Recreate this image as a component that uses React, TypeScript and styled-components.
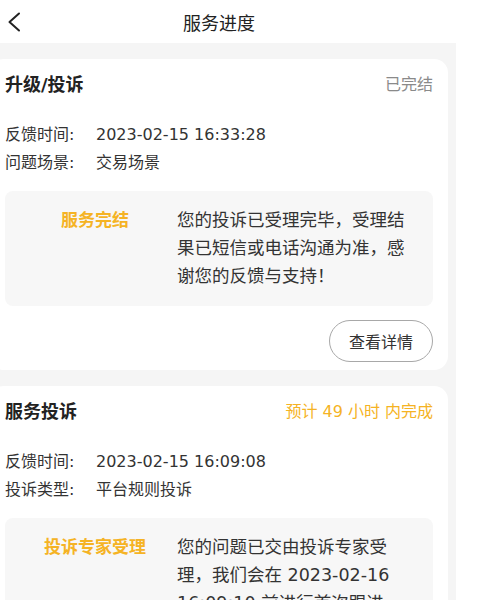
import React from 'react';
import styled, { createGlobalStyle } from 'styled-components';

const GlobalStyle = createGlobalStyle`
  html, body {
    margin: 0;
    padding: 0;
    background: #ffffff;
    overflow: hidden;
  }
  body {
    font-family: "DejaVu Sans", "Noto Sans CJK SC", sans-serif;
    color: #333333;
  }
`;

const Screen = styled.div`
  width: 474px;
  margin-left: -18px;
  display: flex;
  flex-direction: column;
`;

const NavBar = styled.header`
  height: 43px;
  background: #ffffff;
  display: grid;
  grid-template-columns: 60px 1fr 60px;
  align-items: center;
  padding-left: 20px;
  box-sizing: border-box;
`;

const BackButton = styled.button`
  border: none;
  background: none;
  padding: 0;
  width: 24px;
  height: 24px;
  display: flex;
  align-items: center;
  justify-content: center;
  cursor: pointer;
`;

const NavTitle = styled.h1`
  margin: 0 0 0 -20px;
  font-size: 18px;
  font-weight: 400;
  color: #222222;
  text-align: center;
`;

const Content = styled.main`
  background: #f5f5f5;
  padding: 16px 8px 0;
  display: flex;
  flex-direction: column;
  gap: 16px;
  min-height: 600px;
`;

const Card = styled.section`
  background: #ffffff;
  border-radius: 14px;
  padding: 4px 15px 8px;
  display: flex;
  flex-direction: column;
`;

const CardHead = styled.div`
  height: 40px;
  display: flex;
  align-items: center;
  justify-content: space-between;
`;

const CardTitle = styled.h2`
  margin: 0;
  font-size: 18px;
  font-weight: 700;
  color: #222222;
`;

const Status = styled.span<{ $accent?: boolean }>`
  font-size: 16px;
  color: ${p => (p.$accent ? '#f5b324' : '#8a8a8a')};
`;

const InfoList = styled.dl`
  margin: 18px 0 0;
  display: flex;
  flex-direction: column;
`;

const InfoRow = styled.div`
  display: flex;
  font-size: 16px;
  line-height: 28px;
  color: #333333;
`;

const InfoLabel = styled.dt`
  width: 91px;
  flex-shrink: 0;
`;

const InfoValue = styled.dd`
  margin: 0;
`;

const ProgressBox = styled.div`
  margin-top: 14px;
  background: #f7f7f7;
  border-radius: 8px;
  padding: 15px 0 16px 8px;
  display: flex;
  align-items: flex-start;
`;

const StepName = styled.div`
  width: 164px;
  flex-shrink: 0;
  text-align: center;
  font-size: 17px;
  line-height: 28px;
  font-weight: 700;
  color: #f5b324;
`;

const StepText = styled.p`
  margin: 0;
  width: 235px;
  font-size: 17.5px;
  line-height: 28px;
  color: #333333;
`;

const Actions = styled.div`
  margin-top: 14px;
  display: flex;
  justify-content: flex-end;
`;

const DetailButton = styled.button`
  height: 42px;
  width: 104px;
  border: 1px solid #a8a8a8;
  border-radius: 21px;
  background: #ffffff;
  font-family: inherit;
  font-size: 16px;
  color: #333333;
  padding: 0;
  cursor: pointer;
`;

type Item = {
  title: string;
  status: string;
  accent?: boolean;
  info: [string, string][];
  step: string;
  text: string;
};

const items: Item[] = [
  {
    title: '升级/投诉',
    status: '已完结',
    info: [
      ['反馈时间:', '2023-02-15 16:33:28'],
      ['问题场景:', '交易场景'],
    ],
    step: '服务完结',
    text: '您的投诉已受理完毕，受理结果已短信或电话沟通为准，感谢您的反馈与支持！',
  },
  {
    title: '服务投诉',
    status: '预计 49 小时 内完成',
    accent: true,
    info: [
      ['反馈时间:', '2023-02-15 16:09:08'],
      ['投诉类型:', '平台规则投诉'],
    ],
    step: '投诉专家受理',
    text: '您的问题已交由投诉专家受理，我们会在 2023-02-16 16:09:10 前进行首次跟进，请您耐心等待。',
  },
];

export default function App() {
  return (
    <>
      <GlobalStyle />
      <Screen>
        <NavBar>
          <BackButton aria-label="返回">
            <svg width="14" height="20" viewBox="0 0 14 20" fill="none">
              <polyline points="12,1.5 2.5,10 12,18.5" stroke="#222" strokeWidth="2" strokeLinecap="round" strokeLinejoin="round" />
            </svg>
          </BackButton>
          <NavTitle>服务进度</NavTitle>
          <span />
        </NavBar>
        <Content>
          {items.map(item => (
            <Card key={item.title}>
              <CardHead>
                <CardTitle>{item.title}</CardTitle>
                <Status $accent={item.accent}>{item.status}</Status>
              </CardHead>
              <InfoList>
                {item.info.map(([label, value]) => (
                  <InfoRow key={label}>
                    <InfoLabel>{label}</InfoLabel>
                    <InfoValue>{value}</InfoValue>
                  </InfoRow>
                ))}
              </InfoList>
              <ProgressBox>
                <StepName>{item.step}</StepName>
                <StepText>{item.text}</StepText>
              </ProgressBox>
              <Actions>
                <DetailButton>查看详情</DetailButton>
              </Actions>
            </Card>
          ))}
        </Content>
      </Screen>
    </>
  );
}
